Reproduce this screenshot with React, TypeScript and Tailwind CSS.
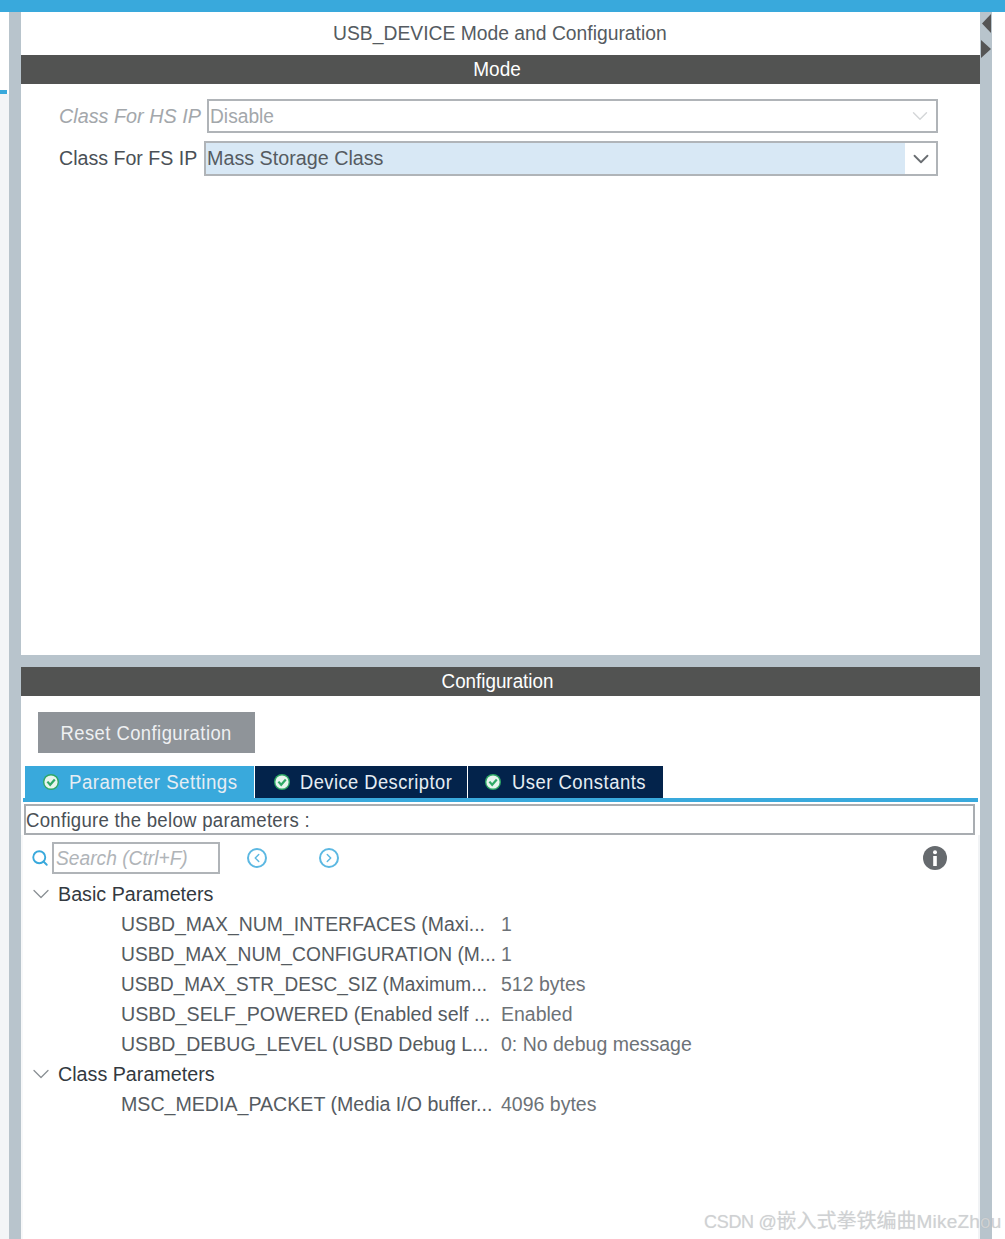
import { ChevronDown, ChevronLeft, ChevronRight, Search } from "lucide-react"

const font = "font-['Liberation_Sans','Noto_Sans_CJK_SC',sans-serif]"

const tabs = [
  { label: "Parameter Settings", active: true, width: "w-[229px]", pad: "pl-[18px]", gap: "gap-[10px]", squeeze: "scale-x-[0.935]" },
  { label: "Device Descriptor", active: false, width: "w-[212px]", pad: "pl-[19px]", gap: "gap-[10px]", squeeze: "scale-x-[0.915]" },
  { label: "User Constants", active: false, width: "w-[195px]", pad: "pl-[17px]", gap: "gap-[11px]", squeeze: "scale-x-[0.925]" },
]

const basicParams = [
  { name: "USBD_MAX_NUM_INTERFACES (Maxi...", value: "1", squeeze: "scale-x-[0.972]" },
  { name: "USBD_MAX_NUM_CONFIGURATION (M...", value: "1", squeeze: "scale-x-[0.962]" },
  { name: "USBD_MAX_STR_DESC_SIZ (Maximum...", value: "512 bytes", squeeze: "scale-x-[0.949]" },
  { name: "USBD_SELF_POWERED (Enabled self ...", value: "Enabled", squeeze: "scale-x-[0.983]" },
  { name: "USBD_DEBUG_LEVEL (USBD Debug L...", value: "0: No debug message", squeeze: "scale-x-[0.977]" },
]

const classParams = [
  { name: "MSC_MEDIA_PACKET (Media I/O buffer...", value: "4096 bytes", squeeze: "scale-x-[0.98]" },
]

function TabCheck() {
  return (
    <svg width="16" height="16" viewBox="0 0 16 16" className="shrink-0">
      <circle cx="8" cy="8" r="8" fill="#2fa866" />
      <circle cx="8" cy="8" r="6.6" fill="#e8f5ee" />
      <path d="M4.4 7.6 7.2 10.8 11.8 5.6" fill="none" stroke="#2fa866" strokeWidth="2.2" />
    </svg>
  )
}

function GroupRow({ label }: { label: string }) {
  return (
    <div className="flex h-[30px] items-center">
      <ChevronDown className="ml-[4px] h-[28px] w-[28px] shrink-0 text-[#8a8f94]" strokeWidth={1.1} />
      <span className="ml-[3px] origin-left scale-x-[0.985] whitespace-nowrap text-[20px] text-[#33393f]">{label}</span>
    </div>
  )
}

function ParamRow({ name, value, squeeze }: { name: string; value: string; squeeze: string }) {
  return (
    <div className="flex h-[30px] items-center text-[20px] text-[#555b61]">
      <span className={`ml-[98px] w-[380px] shrink-0 origin-left whitespace-nowrap ${squeeze}`}>{name}</span>
      <span className="origin-left scale-x-[0.975] whitespace-nowrap text-[#6d7277]">{value}</span>
    </div>
  )
}

export default function App() {
  return (
    <div className={`relative flex h-[1239px] w-[1005px] flex-col overflow-hidden bg-white ${font}`}>
      <div className="h-[12px] shrink-0 bg-[#39a9dc]" />

      <div className="flex min-h-0 flex-1">
        {/* left edge of the neighbouring panel */}
        <div className="flex w-[9px] shrink-0 flex-col">
          <div className="h-[78px] bg-white" />
          <div className="h-[4px] w-[7px] bg-[#39a9dc]" />
          <div className="flex-1 bg-[#f3f5f7]" />
        </div>
        <div className="w-[12px] shrink-0 bg-[#b8c4cc]" />

        <div className="flex w-[959px] shrink-0 flex-col">
          {/* Mode panel */}
          <div className="flex h-[643px] shrink-0 flex-col">
            <div className="flex h-[43px] items-center justify-center pb-[2px] pr-[2px] text-[20px] text-[#555b61]">
              <span className="scale-x-[0.965] whitespace-nowrap">USB_DEVICE Mode and Configuration</span>
            </div>
            <div className="flex h-[29px] items-center justify-center bg-[#525352] pb-[2px] pr-[7px] text-[20px] text-white">
              <span className="scale-x-[0.95]">Mode</span>
            </div>

            <div className="mt-[15px] flex h-[34px] items-center">
              <span className="ml-[38px] w-[148px] shrink-0 origin-left scale-x-[0.99] whitespace-nowrap text-[20px] italic text-[#a3a7ab]">Class For HS IP</span>
              <div className="flex h-[34px] w-[731px] items-center justify-between border-2 border-[#b0b4b8] pl-[1px] pr-[3px]">
                <span className="origin-left scale-x-[0.96] text-[20px] text-[#a3a7ab]">Disable</span>
                <ChevronDown className="h-[26px] w-[26px] text-[#d4d6d8]" strokeWidth={1.3} />
              </div>
            </div>
            <div className="mt-[8px] flex h-[35px] items-center">
              <span className="ml-[38px] w-[145px] shrink-0 origin-left scale-x-[0.98] whitespace-nowrap pb-[2px] text-[20px] text-[#4a5056]">Class For FS IP</span>
              <div className="flex h-[35px] w-[734px] items-stretch border-2 border-[#b0b4b8]">
                <div className="flex flex-1 items-center bg-[#d8e8f5] pb-[2px] pl-[1px]">
                  <span className="origin-left scale-x-[0.986] text-[20px] text-[#555b61]">Mass Storage Class</span>
                </div>
                <div className="flex w-[31px] items-center justify-center">
                  <ChevronDown className="h-[26px] w-[26px] text-[#6a6e72]" strokeWidth={1.7} />
                </div>
              </div>
            </div>
          </div>

          <div className="h-[12px] shrink-0 bg-[#b8c4cc]" />

          {/* Configuration panel */}
          <div className="flex min-h-0 flex-1 flex-col">
            <div className="flex h-[29px] shrink-0 items-center justify-center bg-[#525352] pb-[2px] pr-[7px] text-[20px] text-white">
              <span className="scale-x-[0.94]">Configuration</span>
            </div>

            <button className="ml-[17px] mt-[16px] flex h-[41px] w-[217px] shrink-0 items-center justify-center bg-[#8f9499] text-[20px] tracking-[0.5px] text-[#eef0f2]">
              <span className="scale-x-[0.92] whitespace-nowrap">Reset Configuration</span>
            </button>

            <div className="ml-[4px] mt-[13px] flex h-[32px] shrink-0 gap-[1px]">
              {tabs.map((tab) => (
                <div
                  key={tab.label}
                  className={`flex items-center ${tab.width} ${tab.pad} ${tab.gap} ${tab.active ? "bg-[#39a9dc]" : "bg-[#03234b]"}`}
                >
                  <TabCheck />
                  <span className={`origin-left whitespace-nowrap text-[20px] tracking-[0.5px] text-[#e6edf3] ${tab.squeeze}`}>{tab.label}</span>
                </div>
              ))}
            </div>
            <div className="mx-[2px] h-[4px] shrink-0 bg-[#39a9dc]" />

            <div className="ml-[3px] mt-[2px] flex h-[31px] w-[951px] shrink-0 items-center border-2 border-[#a9adb1]">
              <span className="origin-left scale-x-[0.93] whitespace-nowrap text-[20px] tracking-[0.3px] text-[#4a5056]">Configure the below parameters :</span>
            </div>

            <div className="flex min-h-0 flex-1 flex-col border-x-[2px] border-l-[#f7f8f9] border-r-[#f1f3f5]">
              <div className="mt-[6px] flex h-[34px] shrink-0 items-center">
                <Search className="ml-[8px] h-[18px] w-[18px] text-[#39a9dc]" strokeWidth={2.5} />
                <div className="ml-[3px] flex h-[32px] w-[168px] items-center border-2 border-[#b0b4b8] pl-[2px]">
                  <span className="origin-left scale-x-[0.96] whitespace-nowrap text-[20px] italic text-[#b0b4b8]">Search (Ctrl+F)</span>
                </div>
                <div className="ml-[27px] flex h-[20px] w-[20px] items-center justify-center rounded-full border-2 border-[#5cb8e2]">
                  <ChevronLeft className="h-[14px] w-[14px] text-[#5cb8e2]" strokeWidth={2.5} />
                </div>
                <div className="ml-[52px] flex h-[20px] w-[20px] items-center justify-center rounded-full border-2 border-[#5cb8e2]">
                  <ChevronRight className="h-[14px] w-[14px] text-[#5cb8e2]" strokeWidth={2.5} />
                </div>
                <div className="ml-[584px] flex h-[24px] w-[24px] items-center justify-center rounded-full bg-[#666a6e]">
                  <svg width="6" height="16" viewBox="0 0 6 16">
                    <circle cx="3" cy="2.2" r="2" fill="#fff" />
                    <rect x="1.2" y="6" width="3.6" height="10" fill="#fff" />
                  </svg>
                </div>
              </div>

              <div className="mt-[4px] flex flex-col">
                <GroupRow label="Basic Parameters" />
                {basicParams.map((param) => (
                  <ParamRow key={param.name} name={param.name} value={param.value} squeeze={param.squeeze} />
                ))}
                <GroupRow label="Class Parameters" />
                {classParams.map((param) => (
                  <ParamRow key={param.name} name={param.name} value={param.value} squeeze={param.squeeze} />
                ))}
              </div>
            </div>
          </div>
        </div>

        {/* right splitter */}
        <div className="flex w-[12px] shrink-0 flex-col bg-[#b8c4cc] pt-[2px]">
          <svg width="12" height="46" viewBox="0 0 12 46">
            <path d="M11 0V19L2 9.5Z" fill="#555" />
            <path d="M1 26V44L11 35Z" fill="#555" />
          </svg>
        </div>
        <div className="flex-1 bg-white" />
      </div>

      {/* watermark sits over the splitter */}
      <span className="absolute left-[704px] top-[1206px] flex items-baseline whitespace-nowrap text-[18px] text-[#cfd1d3] [text-shadow:0_0_1px_rgba(0,0,0,0.1)]">
        <span className="tracking-[-0.3px]">CSDN @</span>
        <span className="text-[20px]">嵌入式拳铁编曲</span>
        <span className="text-[19px] tracking-[0.2px]">MikeZhou</span>
      </span>
    </div>
  )
}
